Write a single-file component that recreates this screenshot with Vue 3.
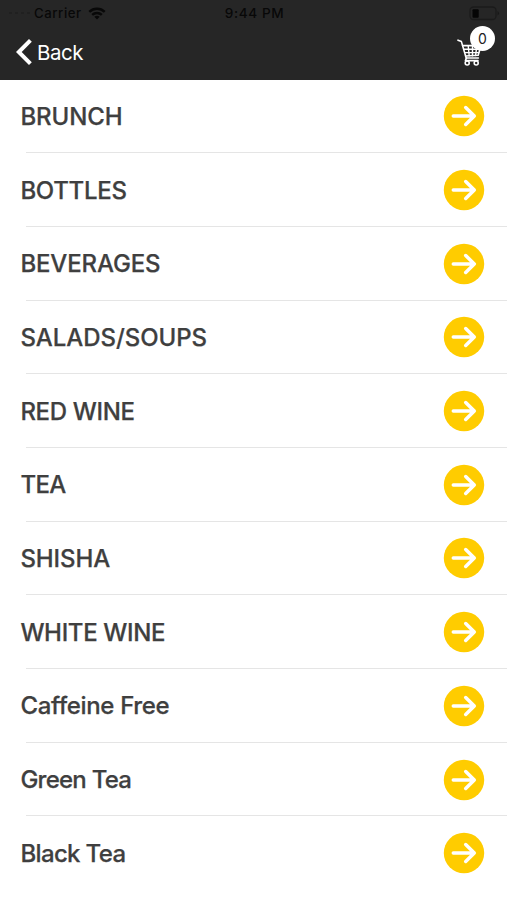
<template>
  <div class="screen">
    <header class="header">
      <div class="status">
        <div class="carrier">
          <span class="dots"><i v-for="n in 4" :key="n"></i></span>
          <span>Carrier</span>
          <svg class="wifi" width="18" height="13" viewBox="0 0 18 13">
            <path d="M1.3 4.9 C5.6 .7 12.4 .7 16.7 4.9" />
            <path d="M4.2 7.9 C6.9 5.3 11.1 5.3 13.8 7.9" />
            <path class="dot" d="M6.3 9.8 Q9 7.8 11.7 9.8 L9 12.6 Z" />
          </svg>
        </div>
        <span class="time">9:44 PM</span>
        <svg class="battery" width="31" height="15" viewBox="0 0 31 15">
          <rect x="1" y="1" width="26" height="12.5" rx="3.5" />
          <rect class="level" x="3.5" y="3.2" width="6.2" height="8.6" rx="1" />
          <path class="level tip" d="M28.5 5 Q31.5 7.2 28.5 9.5 Z" />
        </svg>
      </div>

      <div class="nav">
        <button class="back" @click="goBack">
          <svg width="16" height="28" viewBox="0 0 16 28">
            <path d="M14.4 2.4 L2.8 14 L14.4 25.6" />
          </svg>
          <span>Back</span>
        </button>
        <button class="cart">
          <svg width="26" height="29" viewBox="0 0 26 29">
            <path d="M1 2.2 L4.4 3.6 L9.2 20 H21.4" />
            <path d="M5.6 7.6 H24 L21.2 17.2 L8.6 18" />
            <path class="grid" d="M6.8 11.2 H22.8 M7.8 14.6 H21.8 M11.2 7.8 L12.2 17.8 M15.5 7.8 V17.8 M19.8 7.8 L18.6 17.6" />
            <path d="M9.4 20 L8.4 22.6 H21" />
            <circle cx="10.2" cy="25" r="2" />
            <circle cx="19.2" cy="25" r="2" />
          </svg>
          <span class="badge">{{ cartCount }}</span>
        </button>
      </div>
    </header>

    <ul class="list">
      <li v-for="c in categories" :key="c.name" @click="selected = c.name">
        <span class="name" :style="{ letterSpacing: c.tracking + 'px' }">{{ c.name }}</span>
        <svg class="arrow" width="42" height="42" viewBox="0 0 42 42">
          <circle cx="21" cy="21" r="20.2" />
          <path d="M10.3 21 H31.3 M22.7 12.5 L31.3 21 L22.7 29.5" />
        </svg>
      </li>
    </ul>
  </div>
</template>

<script setup>
import { ref } from 'vue';

const cartCount = ref(0);
const selected = ref('');
const categories = ref([
  { name: 'BRUNCH', tracking: -0.1 },
  { name: 'BOTTLES', tracking: -0.3 },
  { name: 'BEVERAGES', tracking: -0.15 },
  { name: 'SALADS/SOUPS', tracking: -0.05 },
  { name: 'RED WINE', tracking: -0.35 },
  { name: 'TEA', tracking: -0.6 },
  { name: 'SHISHA', tracking: -0.1 },
  { name: 'WHITE WINE', tracking: -0.35 },
  { name: 'Caffeine Free', tracking: -0.35 },
  { name: 'Green Tea', tracking: -0.75 },
  { name: 'Black Tea', tracking: -0.65 }
]);

function goBack() {
  window.history.back();
}
</script>

<style>
body { margin: 0; background: #fff; overflow: hidden; }
</style>

<style scoped>
.screen { height: 900px; overflow: hidden; background: #fff; color: #3f3f3f; font-family: Inter, "Liberation Sans", sans-serif; }
button { border: 0; padding: 0; background: none; color: #fff; font: inherit; }
svg { display: block; fill: none; }

.header { height: 79.5px; box-sizing: border-box; background: #262626; }
.status { height: 26px; display: grid; grid-template-columns: 1fr auto 1fr; align-items: center; padding: 0 7px 0 9px; color: #080808; font-size: 13px; }
.carrier { display: flex; align-items: center; font-size: 13.2px; font-weight: 500; letter-spacing: .55px; }
.dots { display: flex; gap: 3px; width: 25px; }
.dots i { width: 3px; height: 2px; background: #202020; }
.wifi { margin-left: 6px; stroke: #080808; stroke-width: 2.4; }
.wifi .dot { fill: #080808; stroke: none; }
.time { font-size: 13.6px; font-weight: 500; letter-spacing: .6px; }
.battery { justify-self: end; stroke: #1b1b1b; stroke-width: 1.3; }
.battery .level { fill: #050505; stroke: none; }
.battery .tip { fill: #191919; }

.nav { height: 52px; display: flex; justify-content: space-between; align-items: center; padding: 0 12px 0 16px; }
.back { display: flex; align-items: center; gap: 5px; font-size: 20.5px; letter-spacing: -.45px; }
.back svg { stroke: #fff; stroke-width: 4; }
.cart { position: relative; width: 38px; height: 52px; }
.cart svg { stroke: #fff; stroke-width: 1.6; stroke-linecap: round; stroke-linejoin: round; }
.cart .grid { stroke-width: 1.4; }
.badge { position: absolute; top: 0; right: 0; width: 25px; height: 25px; border-radius: 50%; background: #fff; color: #222; font-size: 14px; line-height: 26px; text-align: center; }

.list { margin: 0; padding: 0; list-style: none; }
.list li { position: relative; height: 73.7px; display: flex; align-items: center; justify-content: space-between; padding: 0 22px 0 20.4px; }
.list li:not(:last-child)::after { content: ""; position: absolute; left: 26px; right: 0; bottom: 0; height: 1px; background: #e5e5e5; }
.name { padding-top: 1px; font-size: 24px; font-weight: 500; line-height: 30px; -webkit-text-stroke: .25px #3f3f3f; }
.arrow circle { fill: #fc0; }
.arrow path { stroke: #fff; stroke-width: 3.5; stroke-linecap: round; stroke-linejoin: round; }
</style>
